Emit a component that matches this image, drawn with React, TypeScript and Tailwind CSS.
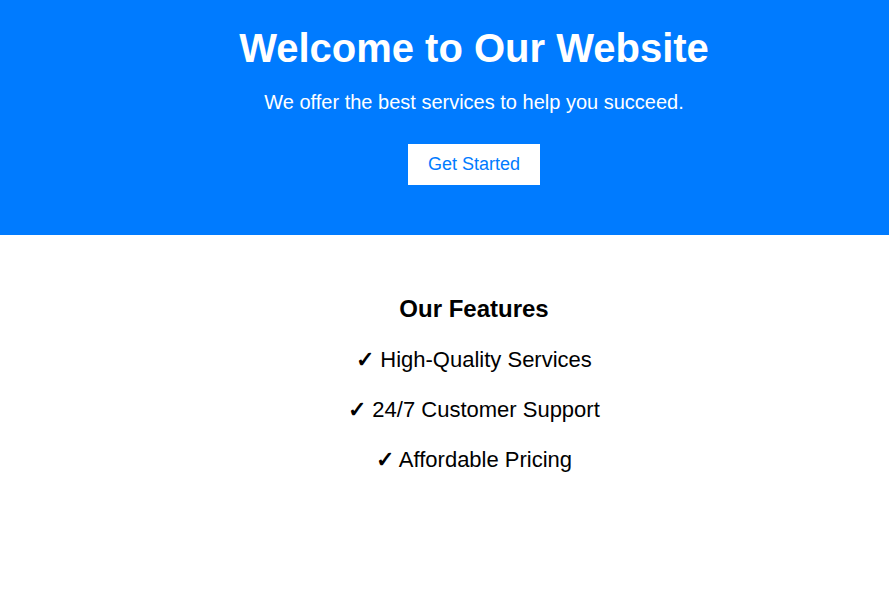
export default function App() {
  const features = ["High-Quality Services", "24/7 Customer Support", "Affordable Pricing"];

  return (
    <div className="min-h-screen bg-white font-['Liberation_Sans',Arial,sans-serif] text-black">
      {/* Hero */}
      <header className="bg-[#007bff] text-white text-center pl-[59px] pt-[25px] pb-[50px]">
        <h1 className="text-[40px] font-bold leading-[46px]">Welcome to Our Website</h1>
        <p className="mt-[20px] text-[20px] leading-[23px]">
          We offer the best services to help you succeed.
        </p>
        <button className="mt-[30px] bg-white text-[#007bff] text-[18px] leading-[21px] px-5 py-2.5">
          Get Started
        </button>
      </header>

      {/* Features */}
      <section className="text-center pl-[59px] pt-[60px]">
        <h2 className="text-[24px] font-bold leading-[28px]">Our Features</h2>
        <ul className="mt-[24px] flex flex-col gap-[25px]">
          {features.map((f) => (
            <li key={f} className="text-[22px] leading-[25px]">
              <span className="font-bold">✓</span> {f}
            </li>
          ))}
        </ul>
      </section>
    </div>
  );
}
